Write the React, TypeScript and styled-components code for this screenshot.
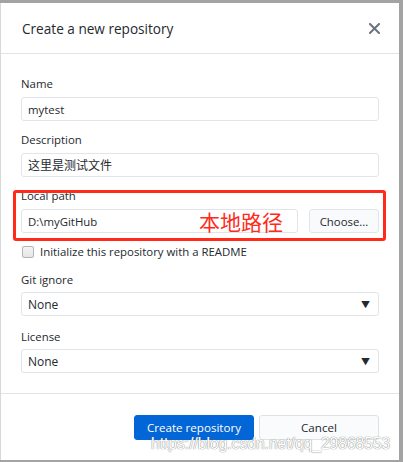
import React from "react";
import styled, { createGlobalStyle } from "styled-components";

const Global = createGlobalStyle`
  html, body { margin: 0; padding: 0; }
  body { background: #a3a3a3; font-family: "Open Sans", "Noto Sans", "Noto Sans CJK SC", sans-serif; }
  * { box-sizing: border-box; }
`;

const Page = styled.div`
  width: 403px;
  height: 462px;
  padding: 3px 4px 2px 0;
  position: relative;
  overflow: hidden;
`;

const Dialog = styled.div`
  width: 399px;
  height: 457px;
  background: #fff;
  border-left: 1px solid #d6d8da;
  display: flex;
  flex-direction: column;
`;

const Header = styled.div`
  height: 51px;
  flex: none;
  display: flex;
  align-items: center;
  justify-content: space-between;
  padding: 0 19px 0 21px;
  border-bottom: 1px solid #e1e4e8;
`;

const Title = styled.h1`
  margin: 0;
  font-size: 13.6px;
  font-weight: 400;
  color: #24292e;
`;

const Close = styled.button`
  border: 0;
  background: none;
  padding: 0;
  width: 12px;
  height: 12px;
  display: flex;
  align-items: center;
  justify-content: center;
`;

const Body = styled.div`
  flex: 1;
  padding: 22px 20px 0 20px;
  display: flex;
  flex-direction: column;
  border-bottom: 1px solid #e1e4e8;
`;

const Group = styled.div<{ $gap?: number }>`
  display: flex;
  flex-direction: column;
  margin-bottom: ${(p) => p.$gap ?? 11}px;
  position: relative;
`;

const Label = styled.label<{ $tight?: boolean }>`
  font-size: 11.4px;
  line-height: 16px;
  color: #24292e;
  margin-bottom: ${(p) => (p.$tight ? 4 : 5)}px;
`;

const Input = styled.div<{ $grow?: boolean; $size?: number }>`
  height: 24px;
  flex: ${(p) => (p.$grow ? "1 1 auto" : "none")};
  border: 1px solid #e1e4e8;
  border-radius: 3px;
  padding: 0 6px;
  display: flex;
  align-items: center;
  font-size: ${(p) => p.$size ?? 11.4}px;
  color: #24292e;
`;

const Row = styled.div`
  display: flex;
  gap: 11px;
`;

const ChooseButton = styled.div`
  width: 70px;
  height: 24px;
  flex: none;
  border: 1px solid #e1e4e8;
  border-radius: 3px;
  background: #f9fafb;
  font-size: 11.4px;
  color: #24292e;
  display: flex;
  align-items: center;
  justify-content: center;
`;

const Annotation = styled.div`
  position: absolute;
  left: -8px;
  right: -7px;
  top: 2px;
  bottom: -8px;
  border: 3px solid #ff2a1a;
  border-radius: 3px;
  pointer-events: none;
`;

const AnnotationText = styled.span`
  position: absolute;
  left: 183px;
  top: 16px;
  font-family: "Noto Sans CJK SC", sans-serif;
  font-size: 21px;
  line-height: 24px;
  color: #ff2a1a;
`;

const CheckRow = styled.div`
  display: flex;
  align-items: center;
  gap: 6px;
  font-size: 11.4px;
  line-height: 16px;
  color: #24292e;
  margin-bottom: 12px;
`;

const Box = styled.span`
  width: 12px;
  height: 12px;
  border: 1px solid #b4b4b4;
  border-radius: 2px;
  background: linear-gradient(#f4f4f4, #e6e6e6);
  margin-left: 1px;
`;

const Select = styled(Input)`
  justify-content: space-between;
  padding-right: 8px;
`;

const Arrow = styled.span`
  font-size: 9px;
  color: #24292e;
`;

const Footer = styled.div`
  height: 66px;
  flex: none;
  display: flex;
  justify-content: flex-end;
  align-items: flex-start;
  gap: 5px;
  padding: 21px 20px 0 0;
`;

const Button = styled.div<{ $primary?: boolean }>`
  width: 120px;
  height: 25px;
  border-radius: 3px;
  font-size: 11.6px;
  display: flex;
  align-items: center;
  justify-content: center;
  background: ${(p) => (p.$primary ? "#0366d6" : "#fafbfc")};
  color: ${(p) => (p.$primary ? "#fff" : "#24292e")};
  border: 1px solid ${(p) => (p.$primary ? "#0366d6" : "#dfe2e5")};
`;

const Watermark = styled.div`
  position: absolute;
  left: 151px;
  top: 434px;
  font-family: "Liberation Sans", Arial, sans-serif;
  font-size: 15.6px;
  line-height: 20px;
  white-space: nowrap;
  color: #fff;
  text-shadow: 0 0 1px rgba(110, 110, 110, 0.9), 0 0 1px rgba(110, 110, 110, 0.6);
  pointer-events: none;
`;

export default function App() {
  return (
    <Page>
      <Global />
      <Dialog>
        <Header>
          <Title>Create a new repository</Title>
          <Close aria-label="close">
            <svg width="11" height="11" viewBox="0 0 11 11">
              <path d="M1 1 L10 10 M10 1 L1 10" stroke="#6a737d" strokeWidth="2" strokeLinecap="square" />
            </svg>
          </Close>
        </Header>
        <Body>
          <Group>
            <Label>Name</Label>
            <Input>mytest</Input>
          </Group>
          <Group>
            <Label>Description</Label>
            <Input $size={12}>这里是测试文件</Input>
          </Group>
          <Group>
            <Label>Local path</Label>
            <Row>
              <Input $grow>D:\myGitHub</Input>
              <ChooseButton>Choose...</ChooseButton>
            </Row>
            <Annotation>
              <AnnotationText>本地路径</AnnotationText>
            </Annotation>
          </Group>
          <CheckRow>
            <Box />
            Initialize this repository with a README
          </CheckRow>
          <Group $gap={13}>
            <Label $tight>Git ignore</Label>
            <Select $size={12}>
              None<Arrow>▼</Arrow>
            </Select>
          </Group>
          <Group>
            <Label $tight>License</Label>
            <Select $size={12}>
              None<Arrow>▼</Arrow>
            </Select>
          </Group>
        </Body>
        <Footer>
          <Button $primary>Create repository</Button>
          <Button>Cancel</Button>
        </Footer>
      </Dialog>
      <Watermark>https://blog.csdn.net/qq_29868553</Watermark>
    </Page>
  );
}
